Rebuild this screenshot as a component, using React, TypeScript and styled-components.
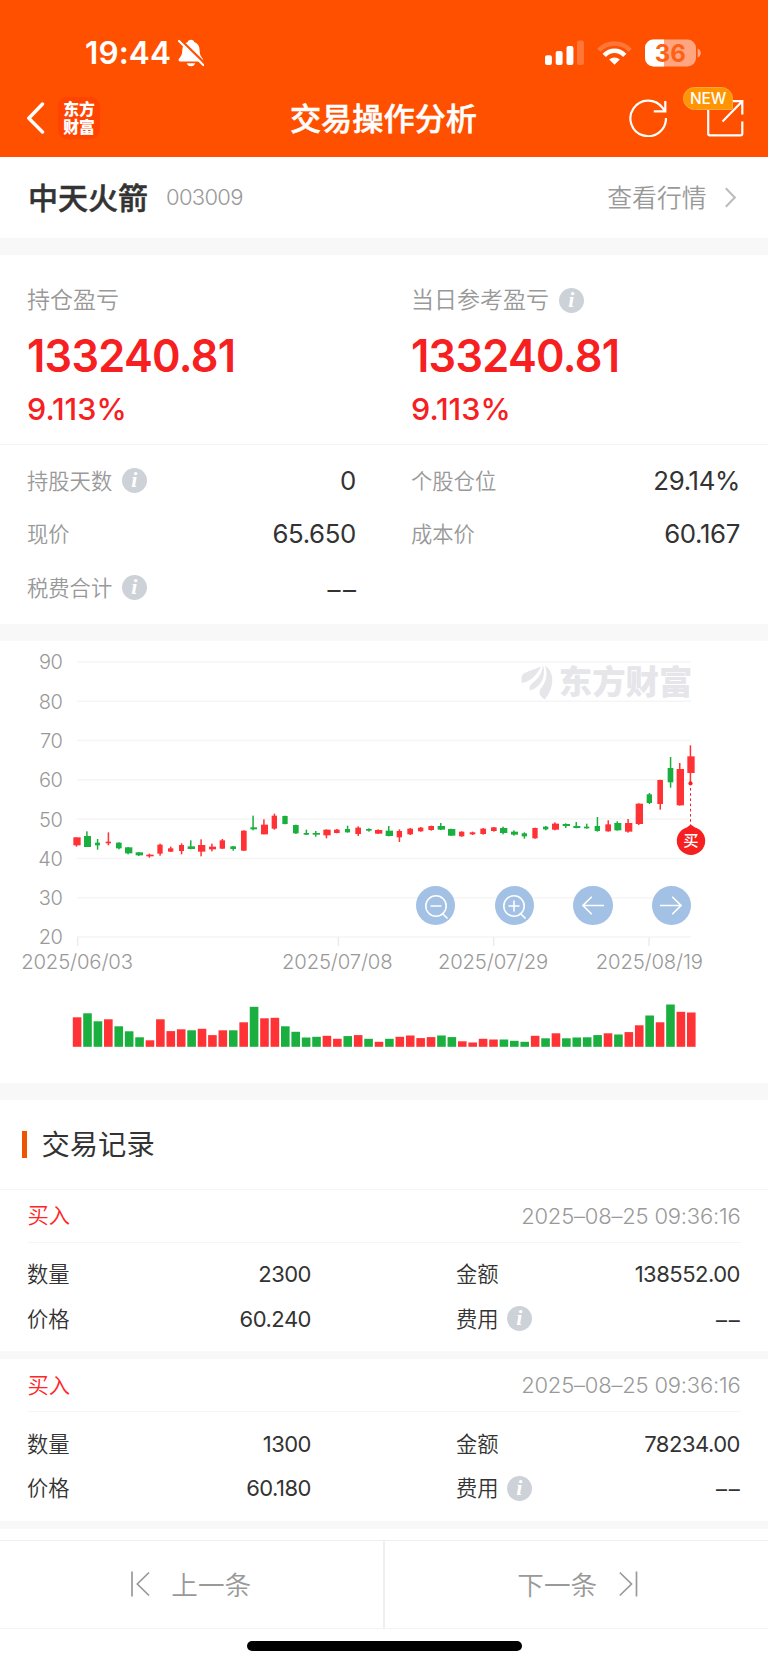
import React from "react";
import styled, { createGlobalStyle } from "styled-components";

const GlobalStyle = createGlobalStyle`
  * { box-sizing: border-box; }
  body {
    margin: 0;
    background: #fff;
    font-family: Inter, "Noto Sans CJK SC", sans-serif;
    color: #333;
  }
  button { font: inherit; border: 0; padding: 0; background: none; }
`;

const Screen = styled.main`
  width: 768px;
  height: 1665px;
  display: flex;
  flex-direction: column;
  overflow: hidden;
  background: #fff;
`;

const Header = styled.header`
  height: 157px;
  background: #ff5000;
  color: #fff;
`;

const StatusBar = styled.div`
  height: 79px;
  padding: 26px 66px 0 85px;
  display: flex;
  justify-content: space-between;
  align-items: center;
`;

const StatusGroup = styled.div<{ $gap: number }>`
  display: flex;
  align-items: center;
  gap: ${(p) => p.$gap}px;
`;

const Clock = styled.span`
  font-size: 31.5px;
  font-weight: 600;
  line-height: 40px;
  letter-spacing: 0.1px;
`;

const NavBar = styled.div`
  height: 78px;
  padding: 0 24px 0 26px;
  display: grid;
  grid-template-columns: 1fr auto 1fr;
  align-items: center;
`;

const NavLeft = styled.div`
  display: flex;
  align-items: center;
  gap: 13px;
`;

const BrandTile = styled.div`
  width: 42px;
  height: 42px;
  border-radius: 9px;
  background: #ff4300;
  font-size: 15.8px;
  font-weight: 900;
  line-height: 18px;
  text-align: center;
  padding-top: 4px;
`;

const Title = styled.h1`
  margin: 0 0 0 -3px;
  padding-top: 2px;
  font-size: 31.2px;
  line-height: 40px;
  font-weight: 500;
  -webkit-text-stroke: 0.5px currentColor;
`;

const NavRight = styled.div`
  display: flex;
  justify-content: flex-end;
  align-items: center;
  gap: 40px;
`;

const ShareButton = styled.button`
  position: relative;
  width: 37px;
  height: 37px;
  display: block;
`;

const NewBadge = styled.span`
  position: absolute;
  left: -24px;
  top: -13px;
  width: 50px;
  height: 23px;
  border-radius: 12px 12px 2px 12px;
  border: 1px solid #ffa544;
  background: #ff9500;
  color: #fff;
  font-size: 15.5px;
  font-weight: 500;
  letter-spacing: -0.2px;
  line-height: 22px;
  text-align: center;
`;

const StockBar = styled.section`
  height: 81px;
  padding: 0 32px 0 28px;
  display: flex;
  align-items: center;
`;

const StockName = styled.h2`
  margin: 0;
  font-size: 30px;
  line-height: 40px;
  font-weight: 500;
  -webkit-text-stroke: 0.5px currentColor;
`;

const StockCode = styled.span`
  flex: 1;
  margin: 0 0 1px 18px;
  font-size: 22px;
  font-weight: 350;
  color: #999;
  letter-spacing: -0.7px;
`;

const QuoteLink = styled.span`
  display: flex;
  align-items: center;
  gap: 18.5px;
  font-size: 24.8px;
  font-weight: 350;
  line-height: 34px;
  color: #999;
`;

const Band = styled.div<{ $h: number }>`
  height: ${(p) => p.$h}px;
  flex: none;
  background: #f8f8f8;
`;

const Summary = styled.section`
  height: 190px;
  padding-top: 29px;
  display: grid;
  grid-template-columns: 1fr 1fr;
  border-bottom: 1px solid #f3f3f3;
`;

const Metric = styled.div`
  padding-left: 27px;
`;

const Label = styled.div<{ $size?: number; $gap?: number; $dark?: boolean }>`
  display: flex;
  align-items: center;
  gap: ${(p) => p.$gap ?? 10}px;
  font-size: ${(p) => p.$size ?? 21.3}px;
  line-height: 32px;
  font-weight: 350;
  color: ${(p) => (p.$dark ? "#333" : "#999")};
`;

const Amount = styled.div`
  margin-top: 12px;
  font-size: 45.3px;
  line-height: 56px;
  font-weight: 600;
  letter-spacing: -0.7px;
  color: #f5201f;
  transform: scaleX(0.955);
  transform-origin: left center;
`;

const Percent = styled.div`
  margin-top: 7px;
  font-size: 30.5px;
  line-height: 36px;
  font-weight: 500;
  color: #f5201f;
`;

const Details = styled.section`
  height: 178.5px;
  padding: 9px 0;
  display: grid;
  grid-template-columns: 1fr 1fr;
  grid-auto-rows: 53.5px;
`;

const DetailCell = styled.div`
  display: flex;
  align-items: center;
  justify-content: space-between;
  padding: 0 28px 0 27px;
`;

const Value = styled.span<{ $empty?: boolean }>`
  font-size: ${(p) => (p.$empty ? 26 : 25.8)}px;
  line-height: 34px;
  font-weight: 370;
  letter-spacing: ${(p) => (p.$empty ? 2.4 : -0.35)}px;
  margin-right: ${(p) => (p.$empty ? -2.4 : 0)}px;
  padding-top: ${(p) => (p.$empty ? 4 : 0)}px;
`;

const ChartPanel = styled.section`
  position: relative;
  height: 442px;
  flex: none;
`;

const ChartSvg = styled.svg`
  display: block;
  font-family: Inter, "Noto Sans CJK SC", sans-serif;
`;

const ChartControls = styled.div`
  position: absolute;
  left: 416px;
  top: 245px;
  display: flex;
  gap: 39.2px;
`;

const RoundButton = styled.button`
  width: 39.4px;
  height: 39.4px;
  border-radius: 50%;
  background: rgba(152, 186, 225, 0.9);
  display: flex;
  align-items: center;
  justify-content: center;
`;

const SectionHead = styled.div`
  height: 89.5px;
  flex: none;
  padding-left: 21.5px;
  display: flex;
  align-items: center;
  gap: 14.5px;
  border-bottom: 1px solid #f5f5f5;
`;

const Accent = styled.span`
  width: 5.5px;
  height: 27px;
  background: #ee5500;
`;

const SectionTitle = styled.h3`
  margin: 0;
  padding-top: 2px;
  font-size: 28.3px;
  line-height: 36px;
  font-weight: 400;
`;

const Record = styled.article`
  height: 169.75px;
  flex: none;
  border-bottom: 8.75px solid #f8f8f8;
`;

const RecordHead = styled.div`
  height: 53px;
  margin: 0 27.5px;
  display: flex;
  align-items: center;
  justify-content: space-between;
  border-bottom: 1px solid #f5f5f5;
`;

const Side = styled.span`
  padding-bottom: 1px;
  font-size: 21.3px;
  line-height: 32px;
  font-weight: 350;
  color: #ff2525;
`;

const Timestamp = styled.time`
  font-size: 22px;
  font-weight: 350;
  letter-spacing: -0.2px;
  color: #999;
`;

const RecordBody = styled.div`
  padding: 9.3px 28px 0 27px;
  display: grid;
  grid-template-columns: 284px 284px;
  justify-content: space-between;
  grid-auto-rows: 44.5px;
`;

const RecordCell = styled.div`
  display: flex;
  align-items: center;
  justify-content: space-between;
`;

const RecordValue = styled.span<{ $empty?: boolean }>`
  font-size: 22px;
  line-height: 30px;
  font-weight: 370;
  letter-spacing: ${(p) => (p.$empty ? 1.8 : -0.5)}px;
  margin-right: ${(p) => (p.$empty ? -1.5 : 0)}px;
  padding-top: ${(p) => (p.$empty ? 2 : 0)}px;
`;

const Pager = styled.nav`
  margin-top: 11px;
  height: 89px;
  flex: none;
  display: grid;
  grid-template-columns: 385px 1fr;
  border-top: 1.5px solid #efefef;
  border-bottom: 1px solid #f4f4f4;
`;

const PagerButton = styled.button<{ $first?: boolean }>`
  display: flex;
  align-items: center;
  justify-content: center;
  gap: 21.5px;
  padding: ${(p) => (p.$first ? "0 1px 2px 0" : "0 0 2px 2px")};
  border-right: ${(p) => (p.$first ? "2px solid #efefef" : "0")};
  font-size: 26.6px;
  font-weight: 350;
  color: #999;
`;

const HomeIndicator = styled.div`
  width: 275px;
  height: 9.5px;
  margin: 12px auto 0;
  border-radius: 5px;
  background: #000;
`;

const Info = () => (
  <svg width="25" height="25" viewBox="0 0 25 25">
    <circle cx="12.5" cy="12.5" r="12.5" fill="#cdd1d8" />
    <text
      x="12.4"
      y="19.3"
      textAnchor="middle"
      fontFamily="Liberation Serif, serif"
      fontStyle="italic"
      fontWeight="700"
      fontSize="22"
      fill="#fff"
    >
      i
    </text>
  </svg>
);

const MutedBell = () => (
  <svg width="26" height="28" viewBox="0 0 26 28">
    <path
      d="M13 .8c1.8 0 3 .9 3.300 2.300 3.400 1.200 5.200 4.300 5.300 8 .1 4.600 1.200 6.300 3 8.400 1 1.300.6 2.900-1 2.900H2.200C.6 22.400 0 20.800 1.100 19.500c1.900-2 3.100-3.800 3.200-8.400.1-3.700 2-6.800 5.400-8C10 1.700 11.200.8 13 .8z"
      fill="#fff"
    />
    <path d="M8.800 24.300h8.400c-.5 1.800-2.100 3-4.200 3s-3.700-1.200-4.200-3z" fill="#fff" />
    <path d="M2.400 .6L27 24.600" stroke="#ff5000" strokeWidth="2.400" />
    <path d="M1 2L25.300 26" stroke="#fff" strokeWidth="2.200" strokeLinecap="round" />
  </svg>
);

const Signal = () => (
  <svg width="39" height="26" viewBox="0 0 39 26" fill="#fff">
    <rect x="0" y="15.300" width="6.900" height="9.700" rx="2" />
    <rect x="10.700" y="11" width="6.900" height="14" rx="2" />
    <rect x="21.500" y="6" width="6.900" height="19" rx="2" />
    <rect x="32" y="0.500" width="6.900" height="24.500" rx="2" opacity="0.22" />
  </svg>
);

const Wifi = () => (
  <svg width="35" height="26" viewBox="0 0 35 26" fill="none" stroke="#fff">
    <path d="M1.800 10.300C10.500 1.300 24.500 1.300 33.200 10.300" strokeWidth="4.600" opacity="0.22" />
    <path d="M7.200 15.400C13.200 9.200 21.800 9.200 27.800 15.400" strokeWidth="4.600" />
    <path d="M17.500 24.800L12.200 19.500C15.200 16.700 19.800 16.700 22.800 19.500z" fill="#fff" stroke="none" />
  </svg>
);

const Battery = () => (
  <svg width="57" height="28" viewBox="0 0 57 28">
    <defs>
      <clipPath id="charge">
        <rect width="19" height="28" />
      </clipPath>
    </defs>
    <rect y="0.500" width="51" height="27" rx="8.500" fill="#ffa680" />
    <rect y="0.500" width="51" height="27" rx="8.500" fill="#fff" clipPath="url(#charge)" />
    <path d="M52.600 9.500c4.200 1 4.200 8 0 9z" fill="#ffa680" />
    <text x="25.300" y="22.600" textAnchor="middle" fontSize="24" fontWeight="700" fill="#ff6015">
      36
    </text>
  </svg>
);

const BackIcon = () => (
  <svg width="19" height="32" viewBox="0 0 19 32" fill="none" stroke="#fff" strokeWidth="3.400">
    <path d="M16.500 2L2.800 16.300L16.500 30" strokeLinecap="round" strokeLinejoin="round" />
  </svg>
);

const RefreshIcon = () => (
  <svg width="38" height="38" viewBox="0 0 38 38" fill="none" stroke="#fff" strokeWidth="2.200">
    <path d="M37 19A17.800 17.800 0 1 1 33.300 8.500L36 12" />
    <path d="M36.300 2V12.300H24.800" />
  </svg>
);

const ShareIcon = () => (
  <svg width="37" height="37" viewBox="0 0 37 37" fill="none" stroke="#fff" strokeWidth="2.200">
    <path d="M12 1.200H3Q1.200 1.200 1.200 3V33.500Q1.200 35.300 3 35.300H33.500Q35.300 35.300 35.300 33.500V21.500" />
    <path d="M23 1.200H35.300V14.500M35 1.500L15.500 21.500" />
  </svg>
);

const Chevron = () => (
  <svg width="11" height="21" viewBox="0 0 11 21" fill="none" stroke="#bbb" strokeWidth="2">
    <path d="M.8 1.200L9.800 10.500L.8 19.800" />
  </svg>
);

const Leaf = () => (
  <g fill="#e5e5ea">
    <path d="M521.700 683C520.500 671 525 673.500 541 666.500C538 672.500 533 681 521.700 683z" />
    <path d="M530 690.500C528.500 686 531 684 536 680C540 676 542.500 671 543 665C545.500 673 544 686 530 690.500z" />
    <path d="M545 665.500C554 672 555.500 685 545 699.500C539.500 696.500 538.500 692.500 540.500 689C546.500 682 548 674 545 665.500z" />
  </g>
);

const RED = "#ff3236";
const GREEN = "#1aaf3e";

// Rising (R) or falling (G) day, then body left, body width, high, body top, body bottom, low.
type Candle = ["R" | "G", number, number, number, number, number, number];

const candles: Candle[] = [
  ["R", 220, 22, 592, 592, 616, 620],
  ["G", 252, 21, 574, 588, 621, 621],
  ["G", 285, 15, 597, 608, 616, 629],
  ["R", 317, 16, 577, 605, 610, 616],
  ["G", 348, 17, 607, 608, 625, 628],
  ["G", 375, 22, 621, 622, 640, 643],
  ["G", 407, 22, 636, 637, 646, 648],
  ["R", 439, 22, 641, 644, 649, 653],
  ["R", 472, 16, 611, 614, 641, 647],
  ["R", 504, 16, 620, 625, 635, 636],
  ["R", 537, 15, 610, 615, 633, 643],
  ["G", 563, 22, 601, 619, 627, 628],
  ["R", 594, 22, 598, 615, 635, 649],
  ["R", 627, 21, 611, 620, 628, 634],
  ["R", 659, 16, 597, 601, 626, 627],
  ["G", 691, 17, 618, 619, 627, 632],
  ["R", 723, 17, 571, 572, 632, 633],
  ["G", 751, 20, 527, 562, 568, 571],
  ["R", 783, 21, 538, 554, 583, 583],
  ["R", 815, 16, 521, 527, 566, 569],
  ["G", 847, 16, 527, 528, 552, 553],
  ["G", 879, 17, 554, 555, 580, 582],
  ["G", 911, 16, 569, 579, 584, 585],
  ["G", 938, 22, 573, 579, 584, 590],
  ["R", 970, 22, 568, 569, 586, 595],
  ["R", 1002, 17, 567, 569, 579, 580],
  ["G", 1035, 15, 557, 567, 577, 578],
  ["R", 1066, 17, 559, 563, 582, 588],
  ["G", 1098, 17, 565, 567, 572, 575],
  ["R", 1125, 22, 568, 570, 581, 582],
  ["G", 1157, 22, 558, 572, 588, 589],
  ["R", 1190, 16, 568, 573, 592, 606],
  ["R", 1222, 17, 564, 566, 583, 585],
  ["R", 1254, 16, 561, 563, 574, 575],
  ["R", 1285, 17, 557, 558, 570, 572],
  ["G", 1313, 22, 549, 558, 569, 570],
  ["G", 1344, 22, 566, 567, 587, 588],
  ["R", 1377, 16, 574, 575, 589, 590],
  ["R", 1409, 17, 575, 577, 583, 585],
  ["R", 1441, 17, 564, 566, 582, 584],
  ["R", 1473, 17, 561, 562, 573, 575],
  ["G", 1500, 22, 560, 564, 579, 583],
  ["G", 1533, 21, 571, 575, 584, 587],
  ["G", 1565, 16, 577, 580, 589, 596],
  ["R", 1597, 16, 563, 564, 595, 596],
  ["G", 1629, 16, 558, 560, 568, 571],
  ["R", 1656, 21, 547, 551, 569, 571],
  ["G", 1688, 22, 550, 552, 558, 564],
  ["G", 1720, 21, 546, 558, 564, 565],
  ["G", 1752, 16, 551, 560, 565, 566],
  ["G", 1784, 16, 531, 558, 573, 575],
  ["R", 1816, 17, 541, 553, 574, 575],
  ["G", 1843, 21, 544, 549, 571, 572],
  ["R", 1875, 22, 537, 549, 575, 578],
  ["R", 1907, 22, 490, 491, 552, 555],
  ["G", 1940, 16, 459, 463, 489, 492],
  ["R", 1972, 17, 419, 420, 492, 509],
  ["G", 2003, 17, 351, 384, 427, 443],
  ["R", 2030, 22, 369, 387, 496, 497],
  ["R", 2062, 22, 316, 349, 399, 430],
];

const volumes = [
  29.5, 33.5, 25.5, 27.5, 20.5, 15.5, 9.5, 6.5, 27.5, 15.7, 17.5, 16.5, 18, 11.7, 16.5, 16.5, 24.5, 40,
  28.5, 29, 20.5, 15, 9.3, 10, 11, 8, 10.7, 11.7, 8, 5, 8, 10, 11.3, 8.7, 9.7, 11.3, 9.7, 5.5, 4.3, 8,
  7.3, 7.3, 6, 5, 11, 8.5, 13.5, 8.5, 9.3, 9.5, 11.7, 13.5, 12.3, 14.7, 21.5, 31.3, 24.5, 42.3, 35, 34.3,
];

const dates = [
  { x: 77.7, label: "2025/06/03", tx: 77 },
  { x: 338.4, label: "2025/07/08", tx: 337.2 },
  { x: 493.7, label: "2025/07/29", tx: 493 },
  { x: 649, label: "2025/08/19", tx: 649.3 },
];

const PriceChart = () => (
  <ChartSvg width="768" height="442" viewBox="0 641 768 442">
    {[90, 80, 70, 60, 50, 40, 30, 20].map((price, i) => {
      const y = 661.9 + i * 39.3;
      return (
        <g key={price}>
          <line x1="77" x2="691" y1={y} y2={y} stroke="#f5f5f6" strokeWidth="1.500" />
          <text
            x="62.300"
            y={y + 7.4}
            textAnchor="end"
            fontSize="20"
            fontWeight="350"
            letterSpacing="-0.500"
            fill="#999"
          >
            {price}
          </text>
        </g>
      );
    })}
    {dates.map((d) => (
      <g key={d.label}>
        <line x1={d.x} x2={d.x} y1="937" y2="946" stroke="#ececec" strokeWidth="1.500" />
        <text
          x={d.tx}
          y="969.400"
          textAnchor="middle"
          fontSize="20.300"
          fontWeight="350"
          letterSpacing="-0.150"
          fill="#999"
        >
          {d.label}
        </text>
      </g>
    ))}
    <Leaf />
    <text x="558.800" y="694.300" fontSize="33.400" fontWeight="900" fill="#e5e5ea">
      东方财富
    </text>
    {candles.map(([kind, x, w, high, top, bottom, low], i) => {
      const fill = kind === "R" ? RED : GREEN;
      const wick = x + w / 2 - (w > 18 ? 2 : 0);
      return (
        <g key={i} fill={fill} transform="translate(0 640) scale(0.33333)">
          <rect x={x} y={top} width={w} height={bottom - top} />
          <rect x={wick - 2} y={high} width="4.500" height={low - high} />
        </g>
      );
    })}
    {volumes.map((h, i) => (
      <rect
        key={i}
        x={72.8 + i * 10.41}
        y={1046.8 - h}
        width="8.600"
        height={h}
        fill={candles[i][0] === "R" ? RED : GREEN}
      />
    ))}
    <circle cx="690.500" cy="783.400" r="2.100" fill="#f5201f" />
    <line
      x1="690.500"
      x2="690.500"
      y1="788"
      y2="825"
      stroke="#f5201f"
      strokeWidth="1"
      strokeDasharray="2.600 2.600"
    />
    <path d="M690.800 824.500L695 827.500C700.500 829 705.200 834 705.200 840.800A14.200 14.200 0 1 1 676.800 840.800C676.800 834 681.500 829 686.800 827.500z" fill="#f5201f" />
    <text x="690.800" y="846.300" textAnchor="middle" fontSize="15.300" fontWeight="500" fill="#fff">
      买
    </text>
  </ChartSvg>
);

const ZoomIcon = ({ plus }: { plus?: boolean }) => (
  <svg width="26" height="26" viewBox="0 0 26 26" fill="none" stroke="#fff" strokeWidth="1.600">
    <circle cx="13" cy="13" r="10.200" />
    <path d="M7.500 13H18.500M19 20L24.500 25.500" />
    {plus && <path d="M13 7.500V18.500" />}
  </svg>
);

const ArrowIcon = ({ right }: { right?: boolean }) => (
  <svg width="22" height="19" viewBox="0 0 22 19" fill="none" stroke="#fff" strokeWidth="1.600">
    <path d={right ? "M0 9.500H21M12.200 .7L21 9.500L12.200 18.300" : "M22 9.500H1M9.800 .7L1 9.500L9.800 18.300"} />
  </svg>
);

const StepIcon = ({ next }: { next?: boolean }) => (
  <svg width="19" height="26" viewBox="0 0 19 26" fill="none" stroke="#999" strokeWidth="1.700">
    <path d={next ? "M17.500 .5V25.500M.8 1.500L12.500 13L.8 24.500" : "M1 .5V25.500M18 1.500L6.300 13L18 24.500"} />
  </svg>
);

const EMPTY = "––";

const metrics = [
  { label: "持仓盈亏", amount: "133240.81", percent: "9.113%", info: false },
  { label: "当日参考盈亏", amount: "133240.81", percent: "9.113%", info: true },
];

const details = [
  { label: "持股天数", value: "0", info: true },
  { label: "个股仓位", value: "29.14%" },
  { label: "现价", value: "65.650" },
  { label: "成本价", value: "60.167" },
  { label: "税费合计", value: EMPTY, info: true },
];

const records = [
  { side: "买入", time: "2025–08–25 09:36:16", quantity: "2300", price: "60.240", total: "138552.00", fee: EMPTY },
  { side: "买入", time: "2025–08–25 09:36:16", quantity: "1300", price: "60.180", total: "78234.00", fee: EMPTY },
];

export default function App() {
  return (
    <>
      <GlobalStyle />
      <Screen>
        <Header>
          <StatusBar>
            <StatusGroup $gap={7}>
              <Clock>19:44</Clock>
              <MutedBell />
            </StatusGroup>
            <StatusGroup $gap={13}>
              <Signal />
              <Wifi />
              <Battery />
            </StatusGroup>
          </StatusBar>
          <NavBar>
            <NavLeft>
              <BackIcon />
              <BrandTile>
                东方
                <br />
                财富
              </BrandTile>
            </NavLeft>
            <Title>交易操作分析</Title>
            <NavRight>
              <RefreshIcon />
              <ShareButton>
                <ShareIcon />
                <NewBadge>NEW</NewBadge>
              </ShareButton>
            </NavRight>
          </NavBar>
        </Header>

        <StockBar>
          <StockName>中天火箭</StockName>
          <StockCode>003009</StockCode>
          <QuoteLink>
            查看行情
            <Chevron />
          </QuoteLink>
        </StockBar>
        <Band $h={17} />

        <Summary>
          {metrics.map((m) => (
            <Metric key={m.label}>
              <Label $size={23}>
                {m.label}
                {m.info && <Info />}
              </Label>
              <Amount>{m.amount}</Amount>
              <Percent>{m.percent}</Percent>
            </Metric>
          ))}
        </Summary>
        <Details>
          {details.map((d) => (
            <DetailCell key={d.label}>
              <Label>
                {d.label}
                {d.info && <Info />}
              </Label>
              <Value $empty={d.value === EMPTY}>{d.value}</Value>
            </DetailCell>
          ))}
        </Details>
        <Band $h={17.5} />

        <ChartPanel>
          <PriceChart />
          <ChartControls>
            <RoundButton><ZoomIcon /></RoundButton>
            <RoundButton><ZoomIcon plus /></RoundButton>
            <RoundButton><ArrowIcon /></RoundButton>
            <RoundButton><ArrowIcon right /></RoundButton>
          </ChartControls>
        </ChartPanel>
        <Band $h={17} />

        <SectionHead>
          <Accent />
          <SectionTitle>交易记录</SectionTitle>
        </SectionHead>
        {records.map((r, i) => (
          <Record key={i}>
            <RecordHead>
              <Side>{r.side}</Side>
              <Timestamp>{r.time}</Timestamp>
            </RecordHead>
            <RecordBody>
              <RecordCell>
                <Label $dark>数量</Label>
                <RecordValue>{r.quantity}</RecordValue>
              </RecordCell>
              <RecordCell>
                <Label $dark>金额</Label>
                <RecordValue>{r.total}</RecordValue>
              </RecordCell>
              <RecordCell>
                <Label $dark>价格</Label>
                <RecordValue>{r.price}</RecordValue>
              </RecordCell>
              <RecordCell>
                <Label $dark $gap={8.5}>
                  费用
                  <Info />
                </Label>
                <RecordValue $empty={r.fee === EMPTY}>{r.fee}</RecordValue>
              </RecordCell>
            </RecordBody>
          </Record>
        ))}

        <Pager>
          <PagerButton $first>
            <StepIcon />
            上一条
          </PagerButton>
          <PagerButton>
            下一条
            <StepIcon next />
          </PagerButton>
        </Pager>
        <HomeIndicator />
      </Screen>
    </>
  );
}
